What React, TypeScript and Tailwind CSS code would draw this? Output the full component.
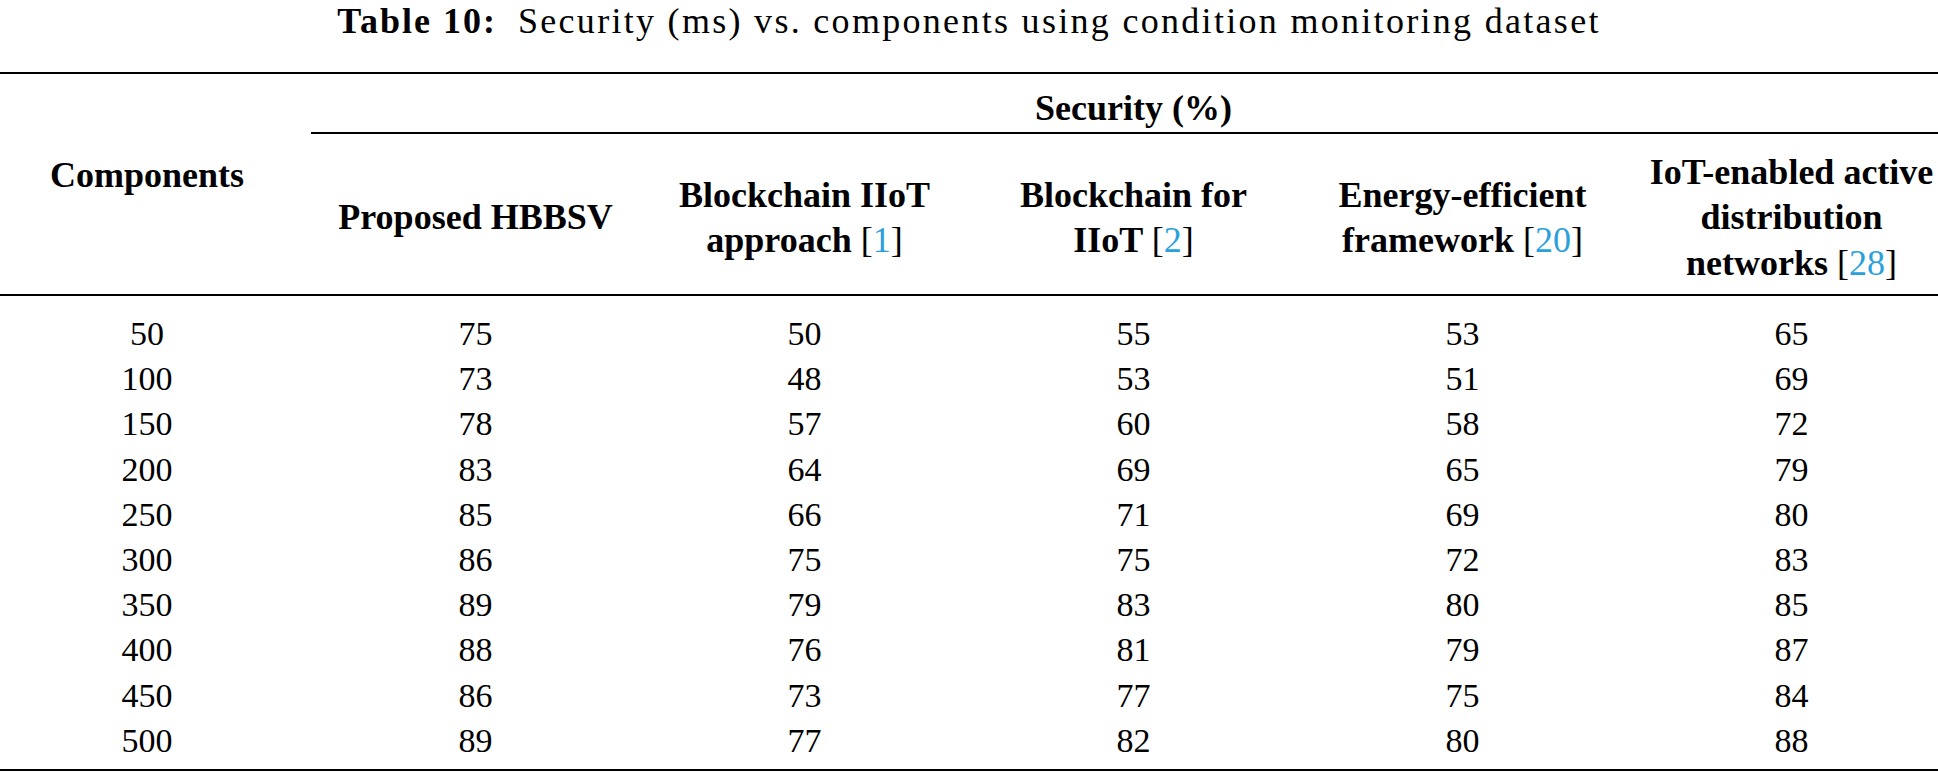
import React from 'react';

const methods: { lines: React.ReactNode[] }[] = [
  { lines: ['Proposed HBBSV'] },
  { lines: ['Blockchain IIoT', <>approach <Ref n="1" /></>] },
  { lines: ['Blockchain for', <>IIoT <Ref n="2" /></>] },
  { lines: ['Energy-efficient', <>framework <Ref n="20" /></>] },
  { lines: ['IoT-enabled active', 'distribution', <>networks <Ref n="28" /></>] },
];

const rows: number[][] = [
  [50, 75, 50, 55, 53, 65],
  [100, 73, 48, 53, 51, 69],
  [150, 78, 57, 60, 58, 72],
  [200, 83, 64, 69, 65, 79],
  [250, 85, 66, 71, 69, 80],
  [300, 86, 75, 75, 72, 83],
  [350, 89, 79, 83, 80, 85],
  [400, 88, 76, 81, 79, 87],
  [450, 86, 73, 77, 75, 84],
  [500, 89, 77, 82, 80, 88],
];

// citation marker: plain brackets, blue number
function Ref({ n }: { n: string }) {
  return (
    <span className="font-normal">
      [<span className="text-[#2aa1db]">{n}</span>]
    </span>
  );
}

export default function App() {
  return (
    <div className="w-[1938px] h-[772px] overflow-hidden bg-white text-black font-['Liberation_Serif',serif]">
      {/* Caption */}
      <div className="w-[1938px] h-[72px] pt-[1px] text-center text-[36px] leading-[40px] whitespace-nowrap">
        <span className="font-bold tracking-[2px]">Table 10:</span>
        <span className="inline-block w-[21px]" />
        <span className="tracking-[2.3px]">Security (ms) vs. components using condition monitoring dataset</span>
      </div>

      <div className="w-[1956px]">
        {/* Header */}
        <div className="grid grid-cols-[311px_repeat(5,329px)] grid-rows-[60px_160px] border-t-2 border-b-2 border-black text-[36px] font-bold">
          <div className="row-span-2 flex items-center justify-center pr-[17px] pb-[18px] leading-[46px]">
            Components
          </div>
          <div className="col-span-5 flex items-center justify-center border-b-2 border-black pt-[10px] leading-[46px]">
            Security (%)
          </div>
          {methods.map((m, i) => (
            <div
              key={i}
              className="flex items-center justify-center text-center pt-[8px] leading-[45.5px] whitespace-nowrap"
            >
              <div>
                {m.lines.map((l, j) => (
                  <div key={j}>{l}</div>
                ))}
              </div>
            </div>
          ))}
        </div>

        {/* Body */}
        <div className="pt-[15px] pb-[6px] border-b-2 border-black text-[34px] leading-[45.2px]">
          {rows.map((r, i) => (
            <div key={i} className="grid grid-cols-[311px_repeat(5,329px)] h-[45.2px]">
              {r.map((v, j) => (
                <div key={j} className={j === 0 ? 'text-center pr-[17px]' : 'text-center'}>
                  {v}
                </div>
              ))}
            </div>
          ))}
        </div>
      </div>
    </div>
  );
}
